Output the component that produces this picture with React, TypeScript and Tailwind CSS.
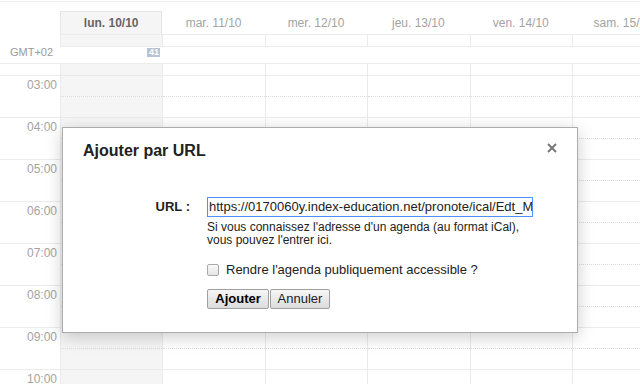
import React from 'react';

const days = ['lun. 10/10', 'mar. 11/10', 'mer. 12/10', 'jeu. 13/10', 'ven. 14/10', 'sam. 15/10'];
const hours = ['03:00', '04:00', '05:00', '06:00', '07:00', '08:00', '09:00', '10:00'];

const Cells: React.FC<{ className?: string; dotted?: boolean }> = ({ className = '', dotted }) => (
  <>
    {days.map((d, i) => (
      <div
        key={d}
        className={`w-[102.4px] shrink-0 border-l border-[#ebebeb] ${i === 0 ? 'bg-[#f5f5f5]' : ''} ${className}`}
      >
        {dotted && <div className="h-[21px] border-b border-dotted border-[#dcdcdc]" />}
      </div>
    ))}
  </>
);

export default function App() {
  return (
    <div className="relative w-[640px] h-[384px] overflow-hidden bg-white font-['Liberation_Sans',Arial,sans-serif]">
      <div className="w-[720px]">
        <div className="h-[1px]" />
        <div className="h-[1px] bg-[#ededed]" />
        <div className="h-[9px]" />

        {/* day names */}
        <div className="flex h-[23px]">
          <div className="w-[60px] shrink-0" />
          {days.map((d, i) => (
            <div
              key={d}
              className={`w-[102.4px] shrink-0 flex items-center justify-center text-[12px] ${
                i === 0
                  ? 'bg-[#f5f5f5] border border-b-0 border-[#e5e5e5] font-bold text-[#666]'
                  : 'text-[#a3a3a3]'
              }`}
            >
              {d}
            </div>
          ))}
        </div>

        {/* all-day row */}
        <div className="flex h-[13px]">
          <div className="w-[60px] shrink-0" />
          <div className="flex border-y border-[#ebebeb]">
            <Cells className="h-[11px]" />
          </div>
        </div>

        {/* timezone row */}
        <div className="flex h-[16px]">
          <div className="w-[60px] shrink-0 pl-[10px] text-[11px] leading-[11px] text-[#9a9a9a]">GMT+02</div>
          <div className="w-[102.4px] shrink-0 flex justify-end pr-[2px] pt-[1px]">
            <span className="h-[9px] w-[13px] bg-[#b5c5d5] text-white text-[9px] font-bold leading-[9px] text-center">41</span>
          </div>
        </div>

        <div className="flex h-[13px] border-y border-[#ebebeb]">
          <div className="w-[60px] shrink-0" />
          <Cells />
        </div>

        {hours.map(h => (
          <div key={h} className="flex h-[42px] border-b border-[#ebebeb]">
            <div className="w-[60px] shrink-0 pr-[3px] pt-[2px] text-right text-[12px] leading-[14px] text-[#a3a3a3]">{h}</div>
            <Cells dotted />
          </div>
        ))}
      </div>

      {/* dialog */}
      <div className="absolute left-[62px] top-[127px] w-[516px] h-[206px] bg-white border border-[#acacac] shadow-[0_4px_16px_rgba(0,0,0,0.2)]">
        <div className="pl-[20px] pt-[13px] text-[16px] leading-[20px] font-bold text-[#222]">Ajouter par URL</div>
        <svg className="absolute right-[20px] top-[15px]" width="10" height="10" viewBox="0 0 10 10">
          <path d="M1 1L9 9M9 1L1 9" stroke="#777" strokeWidth="2" />
        </svg>

        <div className="mt-[36px] flex">
          <div className="w-[144px] shrink-0 pr-[17px] text-right text-[13px] font-bold leading-[20px] text-[#222]">URL :</div>
          <div className="flex flex-col">
            <div className="w-[326px] h-[20px] border border-[#4d90fe] overflow-hidden whitespace-nowrap pl-[1px] text-[13px] leading-[18px] text-[#222] flex items-center">
              <span className="w-[1px] h-[14px] bg-black" />
              <span>https://0170060y.index-education.net/pronote/ical/Edt_MARTIN.ics</span>
            </div>
            <div className="mt-[4px] text-[12px] leading-[13px] text-[#222]">
              Si vous connaissez l'adresse d'un agenda (au format iCal),
              <br />
              vous pouvez l'entrer ici.
            </div>
            <label className="mt-[15px] flex items-center gap-[7px] text-[13px] leading-[16px] text-[#222]">
              <span className="w-[12px] h-[12px] rounded-[2px] border border-[#a9a9a9] bg-gradient-to-b from-[#fafafa] to-[#e4e4e4]" />
              Rendre l'agenda publiquement accessible ?
            </label>
            <div className="mt-[11px] flex gap-[1px]">
              <button className="w-[62px] h-[20px] rounded-[2px] border border-[#a0a0a0] bg-gradient-to-b from-[#f6f6f6] to-[#dcdcdc] text-[13px] font-bold text-black leading-[18px]">
                Ajouter
              </button>
              <button className="w-[60px] h-[20px] rounded-[2px] border border-[#a0a0a0] bg-gradient-to-b from-[#f6f6f6] to-[#dcdcdc] text-[13px] text-[#222] leading-[18px]">
                Annuler
              </button>
            </div>
          </div>
        </div>
      </div>
    </div>
  );
}
